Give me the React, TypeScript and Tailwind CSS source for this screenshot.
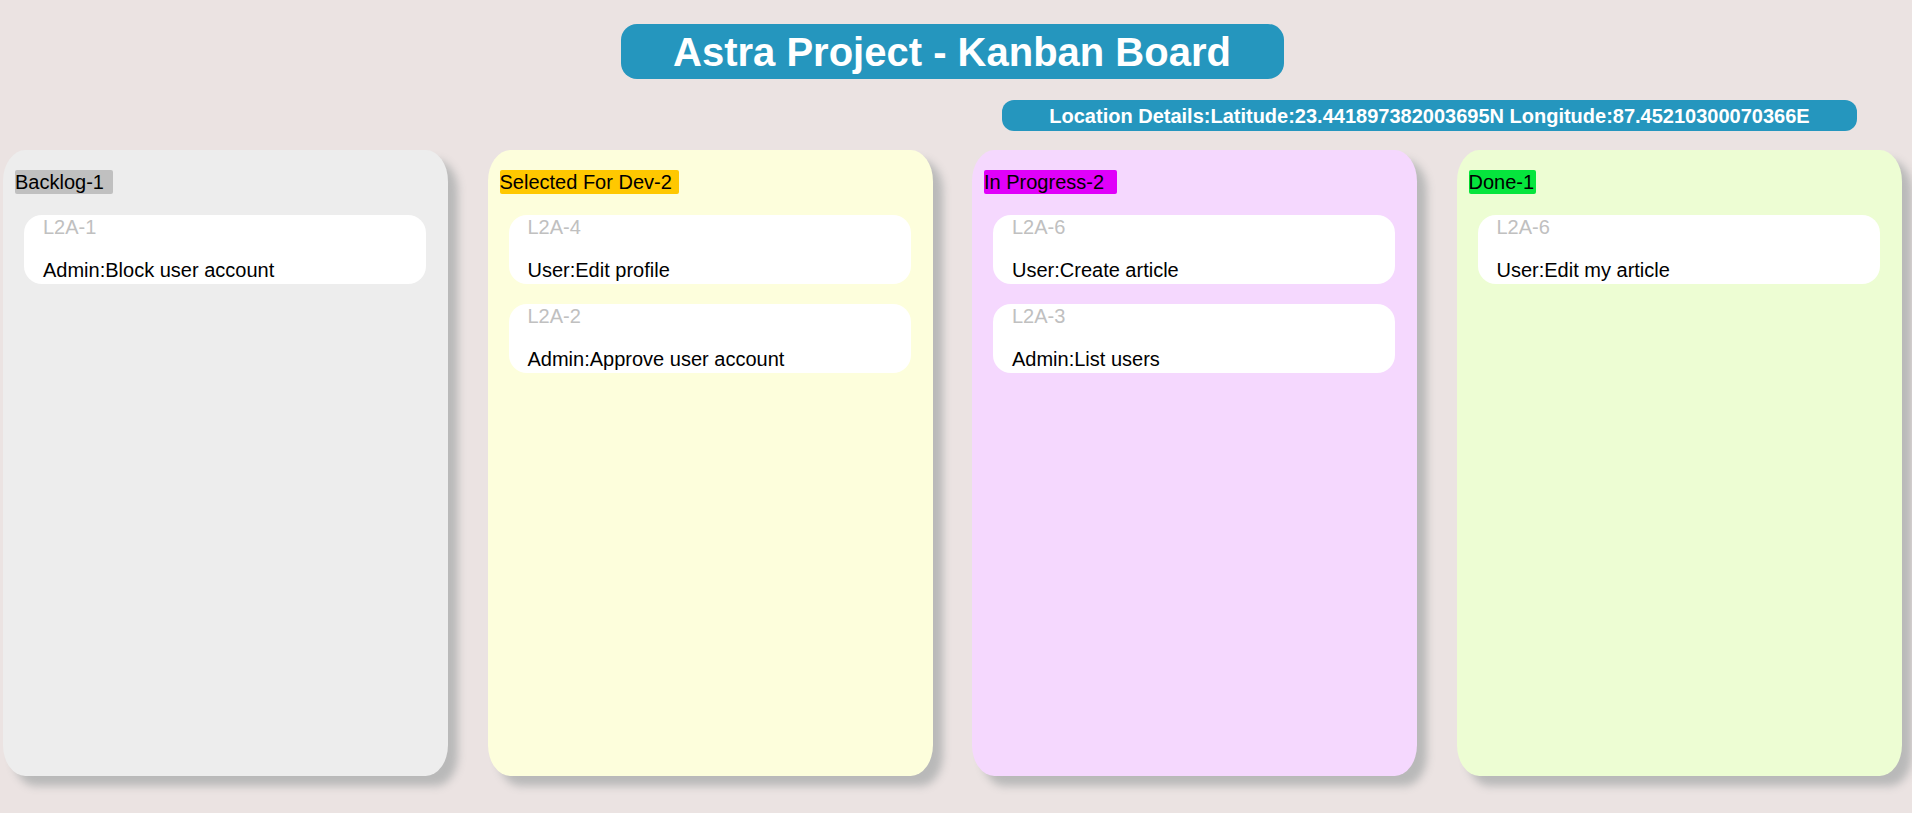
type Task = { id: string; title: string };

type Column = {
  name: string;
  labelWidth: string;
  labelBg: string;
  bg: string;
  tasks: Task[];
};

const COLUMNS: Column[] = [
  {
    name: "Backlog",
    labelWidth: "w-[98px]",
    labelBg: "bg-[#c0c0c0]",
    bg: "bg-[#ededed]",
    tasks: [{ id: "L2A-1", title: "Admin:Block user account" }],
  },
  {
    name: "Selected For Dev",
    labelWidth: "w-[179px]",
    labelBg: "bg-[#ffc800]",
    bg: "bg-[#fdfedc]",
    tasks: [
      { id: "L2A-4", title: "User:Edit profile" },
      { id: "L2A-2", title: "Admin:Approve user account" },
    ],
  },
  {
    name: "In Progress",
    labelWidth: "w-[133px]",
    labelBg: "bg-[#e000fa]",
    bg: "bg-[#f5d8fe]",
    tasks: [
      { id: "L2A-6", title: "User:Create article" },
      { id: "L2A-3", title: "Admin:List users" },
    ],
  },
  {
    name: "Done",
    labelWidth: "w-[67px]",
    labelBg: "bg-[#06e53d]",
    bg: "bg-[#edfdd3]",
    tasks: [{ id: "L2A-6", title: "User:Edit my article" }],
  },
];

function TaskCard({ task }: { task: Task }) {
  return (
    <div className="flex h-[69px] flex-col rounded-[18px] bg-white pl-[19px] pt-[1px]">
      <div className="text-[20px] leading-[23px] text-[#c0c0c0]">{task.id}</div>
      <div className="mt-[20px] text-[20px] leading-[23px] text-black">
        {task.title}
      </div>
    </div>
  );
}

function BoardColumn({ column }: { column: Column }) {
  return (
    <div
      className={`flex h-[626px] w-[445px] shrink-0 flex-col rounded-[5%] pt-[20px] shadow-[10px_10px_8px_#b9b9b9] ${column.bg}`}
    >
      <div className="pl-[12px]">
        <div
          className={`h-[24px] rounded-[2px] text-[20px] leading-[24px] text-black ${column.labelWidth} ${column.labelBg}`}
        >
          {column.name}-{column.tasks.length}
        </div>
      </div>
      <div className="mt-[21px] flex flex-col gap-[20px] pl-[21px] pr-[22px]">
        {column.tasks.map((task) => (
          <TaskCard key={task.id + task.title} task={task} />
        ))}
      </div>
    </div>
  );
}

export default function App() {
  return (
    <div className="min-h-[813px] w-full bg-[#ebe3e2] font-['Liberation_Sans',Arial,sans-serif]">
      <div className="flex justify-center pr-[8px] pt-[24px]">
        <h1 className="flex h-[55px] w-[663px] items-center justify-center rounded-[16px] bg-[#2596be] text-[40px] font-bold text-white">
          Astra Project - Kanban Board
        </h1>
      </div>
      <div className="mt-[21px] flex justify-end pr-[55px]">
        <div className="flex h-[31px] w-[855px] items-center justify-center rounded-[12px] bg-[#2596be] text-[20px] font-bold text-white">
          Location Details:Latitude:23.441897382003695N Longitude:87.45210300070366E
        </div>
      </div>
      <div className="mt-[19px] flex gap-[39.5px] pl-[3px]">
        {COLUMNS.map((column) => (
          <BoardColumn key={column.name} column={column} />
        ))}
      </div>
    </div>
  );
}
